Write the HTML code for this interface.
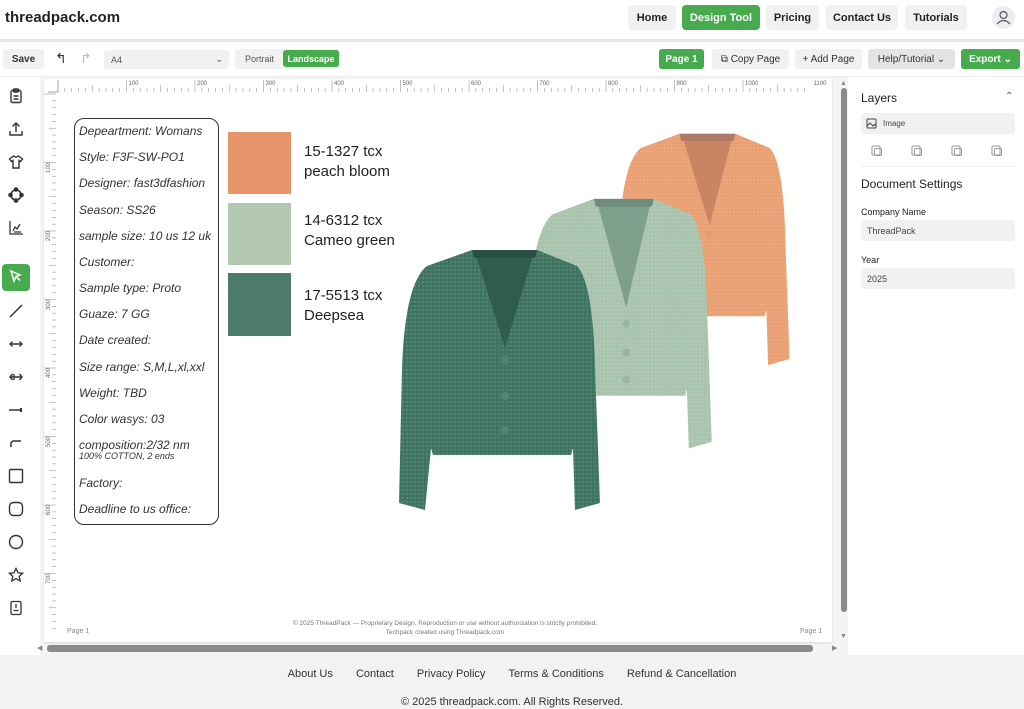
<!DOCTYPE html>
<html><head><meta charset="utf-8"><style>
*{margin:0;padding:0;box-sizing:border-box}
body{width:1024px;height:709px;overflow:hidden;font-family:"Liberation Sans",sans-serif;background:#fff;position:relative;color:#222}
.abs{position:absolute}
.btn{position:absolute;height:25px;border-radius:4px;background:#f1f1f1;font-size:11px;font-weight:bold;display:flex;align-items:center;justify-content:center;color:#222}
.tb{position:absolute;height:19px;border-radius:3px;background:#f1f1f1;font-size:10px;display:flex;align-items:center;justify-content:center;color:#333}
.btn.g,.tb.g{background:#47aa4c;color:#fff}
.info{font-family:"Liberation Sans",sans-serif;font-style:italic;font-size:12px;color:#333}
.info div{position:absolute;left:4px;white-space:nowrap}
.sw{position:absolute;left:228px;width:63px;height:62px}
.swt{position:absolute;left:304px;font-size:15px;line-height:20px;color:#222}
.side svg{position:absolute;left:8px}
.foot a{color:#333;text-decoration:none;margin:0 10px}
</style></head><body>
<div class="abs" style="left:5px;top:9px;font-size:15px;font-weight:bold;color:#222">threadpack.com</div>
<div class="btn" style="left:628px;top:5px;width:48px">Home</div>
<div class="btn g" style="left:682px;top:5px;width:78px">Design Tool</div>
<div class="btn" style="left:766px;top:5px;width:53px">Pricing</div>
<div class="btn" style="left:826px;top:5px;width:72px">Contact Us</div>
<div class="btn" style="left:905px;top:5px;width:62px">Tutorials</div>
<div class="abs" style="left:992px;top:6px;width:23px;height:23px;border-radius:50%;background:#eceef1"><svg width="23" height="23"><circle cx="11.5" cy="9" r="3.5" fill="none" stroke="#555" stroke-width="1.2"/><path d="M5 18q6.5-7 13 0" fill="none" stroke="#555" stroke-width="1.2"/></svg></div>
<div class="abs" style="left:0;top:39px;width:1024px;height:3px;background:#e6e6e6"></div>
<div class="tb" style="left:3px;top:49px;width:41px;height:20px;font-weight:bold">Save</div>
<div class="abs" style="left:55px;top:50px;font-size:14px;color:#333">↰</div>
<div class="abs" style="left:80px;top:50px;font-size:14px;color:#bbb">↱</div>
<div class="tb" style="left:104px;top:50px;width:125px;justify-content:flex-start;padding-left:7px;font-size:9px;color:#555">A4<span style="position:absolute;right:6px">⌄</span></div>
<div class="abs" style="left:235px;top:49px;width:105px;height:20px;background:#f1f1f1;border-radius:3px"></div>
<div class="abs" style="left:245px;top:54px;font-size:9px;color:#555">Portrait</div>
<div class="tb g" style="left:283px;top:50px;width:56px;height:17px;font-size:9px;font-weight:bold">Landscape</div>
<div class="tb g" style="left:659px;top:49px;width:45px;height:20px;font-weight:bold">Page 1</div>
<div class="tb" style="left:712px;top:49px;width:77px;height:20px">⧉ Copy Page</div>
<div class="tb" style="left:795px;top:49px;width:67px;height:20px">+ Add Page</div>
<div class="tb" style="left:868px;top:49px;width:87px;height:20px;background:#e4e4e4">Help/Tutorial ⌄</div>
<div class="tb g" style="left:961px;top:49px;width:59px;height:20px;font-weight:bold">Export ⌄</div>
<div class="abs" style="left:0;top:76px;width:1024px;height:1px;background:#eee"></div>
<div class="side">
<svg style="top:88px" width="16" height="16" fill="none" stroke="#333" stroke-width="1.4"><rect x="3" y="2.5" width="10" height="12" rx="1.5"/><rect x="5.5" y="1" width="5" height="3" rx="1"/><path d="M5.5 8h5M5.5 11h5"/></svg>
<svg style="top:121px" width="16" height="16" fill="none" stroke="#333" stroke-width="1.4"><path d="M8 11V2M4.5 5.5L8 2l3.5 3.5M2 10v4h12v-4"/></svg>
<svg style="top:154px" width="16" height="16" fill="none" stroke="#333" stroke-width="1.4"><path d="M5.5 2L1.5 5l2 2.5 1.5-1V14h6V6.5l1.5 1 2-2.5-4-3q-2.5 2-5 0z"/></svg>
<svg style="top:187px" width="16" height="16" fill="none" stroke="#333" stroke-width="1.6"><circle cx="8" cy="8" r="5"/><circle cx="8" cy="2.5" r="1.5" fill="#333"/><circle cx="8" cy="13.5" r="1.5" fill="#333"/><circle cx="2.5" cy="8" r="1.5" fill="#333"/><circle cx="13.5" cy="8" r="1.5" fill="#333"/></svg>
<svg style="top:220px" width="16" height="16" fill="none" stroke="#333" stroke-width="1.3"><path d="M2 1v13h13M5 11l2-4 2 2 3-5M6 12h7"/></svg>
</div>
<div class="abs" style="left:2px;top:264px;width:28px;height:27px;border-radius:4px;background:#47aa4c"><svg width="28" height="27" fill="none" stroke="#fff" stroke-width="1.5"><path d="M9 7l9 4-4 1.5L12 17z M14 12.5l4 4"/></svg></div>
<div class="side">
<svg style="top:303px" width="16" height="16" stroke="#333" stroke-width="1.5"><path d="M2 14L14 2"/></svg>
<svg style="top:336px" width="16" height="16" fill="none" stroke="#333" stroke-width="1.4"><path d="M2 8h12M4.5 5.5L2 8l2.5 2.5M11.5 5.5L14 8l-2.5 2.5"/></svg>
<svg style="top:369px" width="16" height="16" fill="none" stroke="#333" stroke-width="1.4"><path d="M2 8h12M4.5 5L2 8l2.5 3M11.5 5L14 8l-2.5 3M6 5v6"/></svg>
<svg style="top:402px" width="16" height="16" fill="none" stroke="#333" stroke-width="1.5"><path d="M1 8h13"/><path d="M13 6v4" stroke-width="2"/></svg>
<svg style="top:435px" width="16" height="16" fill="none" stroke="#333" stroke-width="1.5"><path d="M3 12V9q0-3 3-3h7"/></svg>
<svg style="top:468px" width="16" height="16" fill="none" stroke="#333" stroke-width="1.4"><rect x="1.5" y="1.5" width="13" height="13" rx="1"/></svg>
<svg style="top:501px" width="16" height="16" fill="none" stroke="#333" stroke-width="1.4"><rect x="1.5" y="1.5" width="13" height="13" rx="4"/></svg>
<svg style="top:534px" width="16" height="16" fill="none" stroke="#333" stroke-width="1.4"><circle cx="8" cy="8" r="6.5"/></svg>
<svg style="top:567px" width="16" height="16" fill="none" stroke="#333" stroke-width="1.3"><path d="M8 1.5l2 4.3 4.6.5-3.4 3.1 1 4.6L8 11.6 3.8 14l1-4.6L1.4 6.3 6 5.8z"/></svg>
<svg style="top:600px" width="16" height="16" fill="none" stroke="#333" stroke-width="1.3"><rect x="3" y="1.5" width="10" height="13" rx="1.5"/><path d="M8 4v4M5.5 10.5h5"/></svg>
</div>
<div class="abs" style="left:40px;top:77px;width:808px;height:578px;background:#f4f4f4"></div>
<div class="abs" style="left:44px;top:79px;width:788px;height:563px;background:#fff;box-shadow:0 1px 2px rgba(0,0,0,.12)"></div>
<svg class="abs" style="left:44px;top:80px" width="788" height="560">
<g stroke="#888" stroke-width="0.7"><path d="M14 0v12M14 12h-10"/></g>
<g id="rt" stroke="#999" stroke-width="0.6"></g>
</svg>
<div class="abs" id="ruler" style="left:44px;top:80px"></div>
<div class="abs info" style="left:74px;top:118px;width:145px;height:407px;border:1.6px solid #333;border-radius:10px">
<div style="top:5px">Depeartment: Womans</div>
<div style="top:31px">Style: F3F-SW-PO1</div>
<div style="top:57px">Designer: fast3dfashion</div>
<div style="top:84px">Season: SS26</div>
<div style="top:110px">sample size: 10 us 12 uk</div>
<div style="top:136px">Customer:</div>
<div style="top:162px">Sample type: Proto</div>
<div style="top:188px">Guaze: 7 GG</div>
<div style="top:214px">Date created:</div>
<div style="top:241px">Size range: S,M,L,xl,xxl</div>
<div style="top:267px">Weight: TBD</div>
<div style="top:293px">Color wasys: 03</div>
<div style="top:319px">composition:2/32 nm</div>
<div style="top:332px;font-size:9px">100% COTTON, 2 ends</div>
<div style="top:357px">Factory:</div>
<div style="top:383px">Deadline to us office:</div>
</div>
<div class="sw" style="top:132px;background:#e7956b"></div>
<div class="sw" style="top:203px;background:#b2c8b1"></div>
<div class="sw" style="top:273px;height:63px;background:#4c7b6b"></div>
<div class="swt" style="top:142px">15-1327 tcx<br>peach bloom</div>
<div class="swt" style="top:211px">14-6312 tcx<br>Cameo green</div>
<div class="swt" style="top:286px">17-5513 tcx<br>Deepsea</div>
<svg class="abs" style="left:0;top:0" width="1024" height="709">
<defs>
<pattern id="knit" width="4" height="4" patternUnits="userSpaceOnUse"><circle cx="2" cy="2" r="0.9" fill="#fff" opacity=".18"/></pattern>
<g id="card">
<path d="M75,2 L140,2 L180,18 Q196,35 198,120 L203,255 L178,262 L176,200 L174,207 L36,207 L34,200 L28,262 L2,255 L5,120 Q8,35 30,18 Z"/>
</g>
</defs>
<g transform="translate(615,132) scale(0.86,0.89)"><use href="#card" fill="#e9a072"/><use href="#card" fill="url(#knit)"/><path d="M78,4 L137,4 L110,105 Z" fill="#c98464"/><path d="M75,2 L140,2 L138,10 L77,10Z" fill="#b07a68"/><circle cx="110" cy="115" r="4" fill="#e59a6d"/></g>
<g transform="translate(525,197) scale(0.92,0.96)"><use href="#card" fill="#a9c4ae"/><use href="#card" fill="url(#knit)"/><path d="M78,4 L137,4 L110,115 Z" fill="#7f9f8d"/><path d="M75,2 L140,2 L138,10 L77,10Z" fill="#6f8c7e"/><circle cx="110" cy="132" r="4" fill="#98b39f"/><circle cx="110" cy="162" r="4" fill="#98b39f"/><circle cx="110" cy="190" r="4" fill="#98b39f"/></g>
<g transform="translate(397,248)"><use href="#card" fill="#3f7462"/><use href="#card" fill="url(#knit)"/><path d="M78,4 L137,4 L108,100 Z" fill="#2f5c4e"/><path d="M75,2 L140,2 L138,10 L77,10Z" fill="#2a4f44"/><circle cx="108" cy="112" r="4.5" fill="#4f8574"/><circle cx="108" cy="148" r="4.5" fill="#4f8574"/><circle cx="108" cy="182" r="4.5" fill="#4f8574"/></g>
</svg>
<div class="abs" style="left:67px;top:628px;font-size:7px;color:#888">Page 1</div>
<div class="abs" style="left:800px;top:628px;font-size:7px;color:#888">Page 1</div>
<div class="abs" style="left:250px;top:619px;width:390px;text-align:center;font-size:6.5px;line-height:9px;color:#777">© 2025 ThreadPack — Proprietary Design. Reproduction or use without authorization is strictly prohibited.<br>Techpack created using Threadpack.com</div>
<div class="abs" style="left:841px;top:88px;width:6px;height:524px;background:#8a8a8a;border-radius:3px"></div>
<div class="abs" style="left:840px;top:80px;font-size:7px;color:#888">▲</div>
<div class="abs" style="left:840px;top:633px;font-size:7px;color:#888">▼</div>
<div class="abs" style="left:47px;top:645px;width:766px;height:7px;background:#8a8a8a;border-radius:3px"></div>
<div class="abs" style="left:37px;top:644px;font-size:7px;color:#888">◀</div>
<div class="abs" style="left:832px;top:644px;font-size:7px;color:#888">▶</div>
<div class="abs" style="left:861px;top:91px;font-size:12px;color:#222">Layers</div>
<div class="abs" style="left:1005px;top:91px;font-size:10px;color:#555">⌃</div>
<div class="abs" style="left:861px;top:113px;width:154px;height:21px;background:#f1f1f1;border-radius:4px"><svg class="abs" style="left:5px;top:5px" width="11" height="11" fill="none" stroke="#444" stroke-width="1"><rect x="1" y="1" width="9" height="9" rx="1"/><path d="M1 8l3-3 3 3 1.5-1.5L10 8"/></svg><span class="abs" style="left:22px;top:6px;font-size:8px;color:#444">Image</span></div>
<svg class="abs" style="left:870px;top:144px" width="140" height="14" fill="none" stroke="#999" stroke-width="1"><g><rect x="2" y="2" width="8" height="9" rx="1"/><rect x="4.5" y="4.5" width="7" height="7" rx="1"/></g><g transform="translate(40,0)"><rect x="2" y="2" width="8" height="9" rx="1"/><rect x="4.5" y="4.5" width="7" height="7" rx="1"/></g><g transform="translate(80,0)"><rect x="2" y="2" width="8" height="9" rx="1"/><rect x="4.5" y="4.5" width="7" height="7" rx="1"/></g><g transform="translate(120,0)"><rect x="2" y="2" width="8" height="9" rx="1"/><rect x="4.5" y="4.5" width="7" height="7" rx="1"/></g></svg>
<div class="abs" style="left:861px;top:166px;width:154px;height:1px;background:#f0f0f0"></div>
<div class="abs" style="left:861px;top:177px;font-size:12px;color:#222">Document Settings</div>
<div class="abs" style="left:861px;top:207px;font-size:9px;color:#222">Company Name</div>
<div class="abs" style="left:861px;top:220px;width:154px;height:21px;background:#f1f1f1;border-radius:4px;font-size:9px;color:#444;padding:6px 6px">ThreadPack</div>
<div class="abs" style="left:861px;top:255px;font-size:9px;color:#222">Year</div>
<div class="abs" style="left:861px;top:268px;width:154px;height:21px;background:#f1f1f1;border-radius:4px;font-size:9px;color:#444;padding:6px 6px">2025</div>
<div class="abs foot" style="left:0;top:655px;width:1024px;height:54px;background:#f0f2f4">
<div style="position:absolute;top:13px;width:100%;text-align:center;font-size:11px;color:#333"><a>About Us</a> <a>Contact</a> <a>Privacy Policy</a> <a>Terms &amp; Conditions</a> <a>Refund &amp; Cancellation</a></div>
<div style="position:absolute;top:41px;width:100%;text-align:center;font-size:11px;color:#333">© 2025 threadpack.com. All Rights Reserved.</div>
</div>
<script>
var g=document.getElementById('rt'),s='';
for(var i=0;i<110;i++){var x=14+i*6.85;if(x>780)break;var h=i%10==0?12:(i%5==0?7:4);s+='<path d="M'+x+' '+(12-h)+'v'+h+'"/>';}
for(var j=0;j<80;j++){var y=14+j*6.85;if(y>555)break;var w=j%10==0?12:(j%5==0?7:4);s+='<path d="M'+(12-w)+' '+y+'h'+w+'"/>';}
g.innerHTML=s;
var r=document.getElementById('ruler'),t='';
for(var k=1;k<=11;k++){t+='<span style="position:absolute;left:'+(16+k*68.5)+'px;top:1px;font-size:6px;color:#666">'+k*100+'</span>';}
for(var m=1;m<=7;m++){t+='<span style="position:absolute;left:0px;top:'+(16+m*68.5)+'px;font-size:6px;color:#666;transform:rotate(-90deg)">'+m*100+'</span>';}
r.innerHTML=t;
</script>
</body></html>
